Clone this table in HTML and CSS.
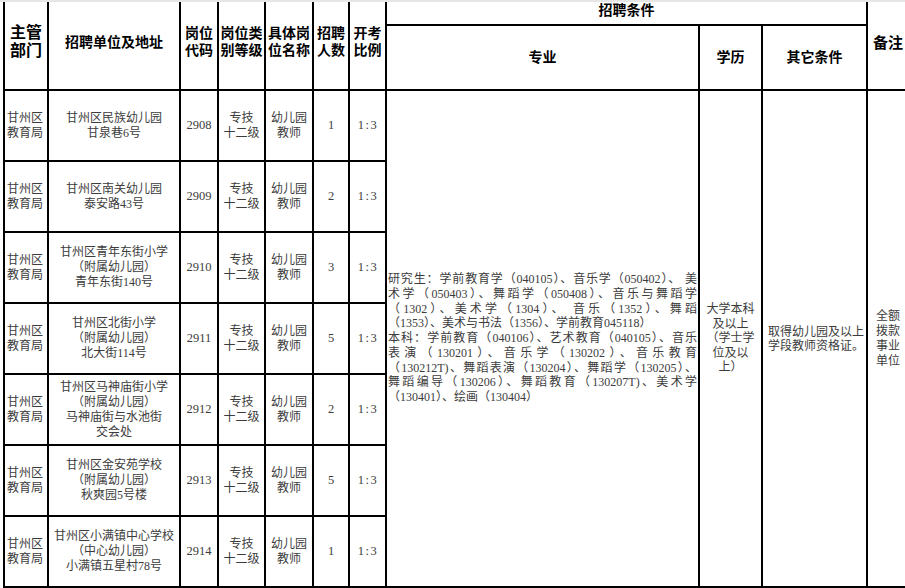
FILE: index.html
```html
<!DOCTYPE html>
<html lang="zh-CN">
<head>
<meta charset="utf-8">
<title>招聘岗位表</title>
<link rel="stylesheet" href="styles.css">
</head>
<body>
<div class="topbar"></div>
<table class="jobs">
  <colgroup>
    <col class="c-dept"><col class="c-unit"><col class="c-code"><col class="c-level"><col class="c-name"><col class="c-num"><col class="c-ratio"><col class="c-major"><col class="c-edu"><col class="c-other"><col class="c-note">
  </colgroup>
  <thead>
    <tr class="hrow1">
      <th rowspan="2" class="h-big">主管<br>部门</th>
      <th rowspan="2">招聘单位及地址</th>
      <th rowspan="2">岗位<br>代码</th>
      <th rowspan="2">岗位类<br>别等级</th>
      <th rowspan="2">具体岗<br>位名称</th>
      <th rowspan="2">招聘<br>人数</th>
      <th rowspan="2">开考<br>比例</th>
      <th colspan="3" class="h-top">招聘条件</th>
      <th rowspan="2" class="h-note">备注</th>
    </tr>
    <tr class="hrow2">
      <th>专业</th>
      <th>学历</th>
      <th>其它条件</th>
    </tr>
  </thead>
  <tbody>
    <tr>
      <td class="dept">甘州区<br>教育局</td>
      <td class="unit">甘州区民族幼儿园<br>甘泉巷6号</td>
      <td class="num">2908</td>
      <td class="mid">专技<br>十二级</td>
      <td class="mid">幼儿园<br>教师</td>
      <td class="num">1</td>
      <td class="ratio">1:3</td>
      <td rowspan="7" class="major">
        <span class="jl">研究生：学前教育学（040105）、音乐学（050402）、 美</span>
        <span class="jl">术学（050403）、舞蹈学（050408）、音乐与舞蹈学</span>
        <span class="jl">（1302）、美术学（1304）、 音乐（1352）、舞蹈</span>
        <span class="ll">（1353）、美术与书法（1356）、学前教育045118）</span>
        <span class="jl">本科：学前教育（040106）、艺术教育（040105）、音乐</span>
        <span class="jl">表演（130201）、音乐学（130202）、音乐教育</span>
        <span class="jl">（130212T)、舞蹈表演（130204）、舞蹈学（130205）、</span>
        <span class="jl">舞蹈编导（130206）、舞蹈教育（130207T)、美术学</span>
        <span class="ll">（130401）、绘画（130404）</span>
      </td>
      <td rowspan="7" class="edu">大学本科<br>及以上<br>（学士学<br>位及以<br>上）</td>
      <td rowspan="7" class="other">取得幼儿园及以上<br>学段教师资格证。</td>
      <td rowspan="7" class="note">全额<br>拨款<br>事业<br>单位</td>
    </tr>
    <tr>
      <td class="dept">甘州区<br>教育局</td>
      <td class="unit">甘州区南关幼儿园<br>泰安路43号</td>
      <td class="num">2909</td>
      <td class="mid">专技<br>十二级</td>
      <td class="mid">幼儿园<br>教师</td>
      <td class="num">2</td>
      <td class="ratio">1:3</td>
    </tr>
    <tr>
      <td class="dept">甘州区<br>教育局</td>
      <td class="unit">甘州区青年东街小学<br>（附属幼儿园）<br>青年东街140号</td>
      <td class="num">2910</td>
      <td class="mid">专技<br>十二级</td>
      <td class="mid">幼儿园<br>教师</td>
      <td class="num">3</td>
      <td class="ratio">1:3</td>
    </tr>
    <tr>
      <td class="dept">甘州区<br>教育局</td>
      <td class="unit">甘州区北街小学<br>（附属幼儿园）<br>北大街114号</td>
      <td class="num">2911</td>
      <td class="mid">专技<br>十二级</td>
      <td class="mid">幼儿园<br>教师</td>
      <td class="num">5</td>
      <td class="ratio">1:3</td>
    </tr>
    <tr>
      <td class="dept">甘州区<br>教育局</td>
      <td class="unit">甘州区马神庙街小学<br>（附属幼儿园）<br>马神庙街与水池街<br>交会处</td>
      <td class="num">2912</td>
      <td class="mid">专技<br>十二级</td>
      <td class="mid">幼儿园<br>教师</td>
      <td class="num">2</td>
      <td class="ratio">1:3</td>
    </tr>
    <tr>
      <td class="dept">甘州区<br>教育局</td>
      <td class="unit">甘州区金安苑学校<br>（附属幼儿园）<br>秋爽园5号楼</td>
      <td class="num">2913</td>
      <td class="mid">专技<br>十二级</td>
      <td class="mid">幼儿园<br>教师</td>
      <td class="num">5</td>
      <td class="ratio">1:3</td>
    </tr>
    <tr>
      <td class="dept">甘州区<br>教育局</td>
      <td class="unit">甘州区小满镇中心学校<br>（中心幼儿园）<br>小满镇五星村78号</td>
      <td class="num">2914</td>
      <td class="mid">专技<br>十二级</td>
      <td class="mid">幼儿园<br>教师</td>
      <td class="num">1</td>
      <td class="ratio">1:3</td>
    </tr>
  </tbody>
</table>
</body>
</html>
```
FILE: styles.css
```css
html, body {
  margin: 0;
  padding: 0;
  background: #fff;
  overflow: hidden;
}
body {
  width: 905px;
  height: 588px;
  position: relative;
  font-family: "Liberation Serif", "Noto Sans CJK SC", serif;
  color: #3c3c3c;
}
.topbar {
  position: absolute;
  left: 0;
  top: 0;
  width: 905px;
  height: 2px;
  background: #e6e6e6;
  z-index: 2;
}
.jobs {
  border-collapse: collapse;
  table-layout: fixed;
  width: 910px;
  margin-top: -7px;
  margin-left: 3px;
}
.jobs th, .jobs td {
  border: 2px solid #000;
  padding: 0;
  vertical-align: middle;
  overflow: hidden;
}
.c-dept { width: 44px; }
.c-unit { width: 132px; }
.c-code { width: 38px; }
.c-level { width: 47px; }
.c-name { width: 48px; }
.c-num { width: 36px; }
.c-ratio { width: 37px; }
.c-major { width: 313px; }
.c-edu { width: 63px; }
.c-other { width: 105px; }
.c-note { width: 47px; }

.jobs th {
  font-family: "Liberation Sans", "Noto Sans CJK SC", sans-serif;
  font-weight: 700;
  font-size: 14px;
  line-height: 17px;
  color: #000;
  text-align: center;
}
.hrow1 { height: 31px; }
.hrow2 { height: 65px; }
.jobs th.h-big { font-size: 16px; line-height: 18px; }
.jobs th.h-note { font-size: 15px; text-align: left; padding-left: 5px; }
.jobs th.h-top { padding-top: 2px; }

.jobs tbody tr { height: 71px; }
.jobs td {
  font-size: 12px;
  line-height: 15px;
  text-align: center;
}
.jobs td.dept { text-align: left; padding-left: 2px; }
.jobs td.num { font-size: 12.5px; }
.jobs td.ratio { font-size: 12.5px; letter-spacing: 1.5px; padding-left: 1px; }
.jobs td.major {
  text-align: left;
  padding: 0 1px 0 1px;
  line-height: 14.8px;
}
.jl, .ll { display: block; white-space: nowrap; }
.jl { text-align: justify; text-align-last: justify; }
.ll { text-align: left; }
.jobs td.edu { line-height: 14.5px; }
.jobs td.other { text-align: left; padding-left: 5px; line-height: 14px; }
.jobs td.note { text-align: left; padding-left: 8px; line-height: 15px; }
```
